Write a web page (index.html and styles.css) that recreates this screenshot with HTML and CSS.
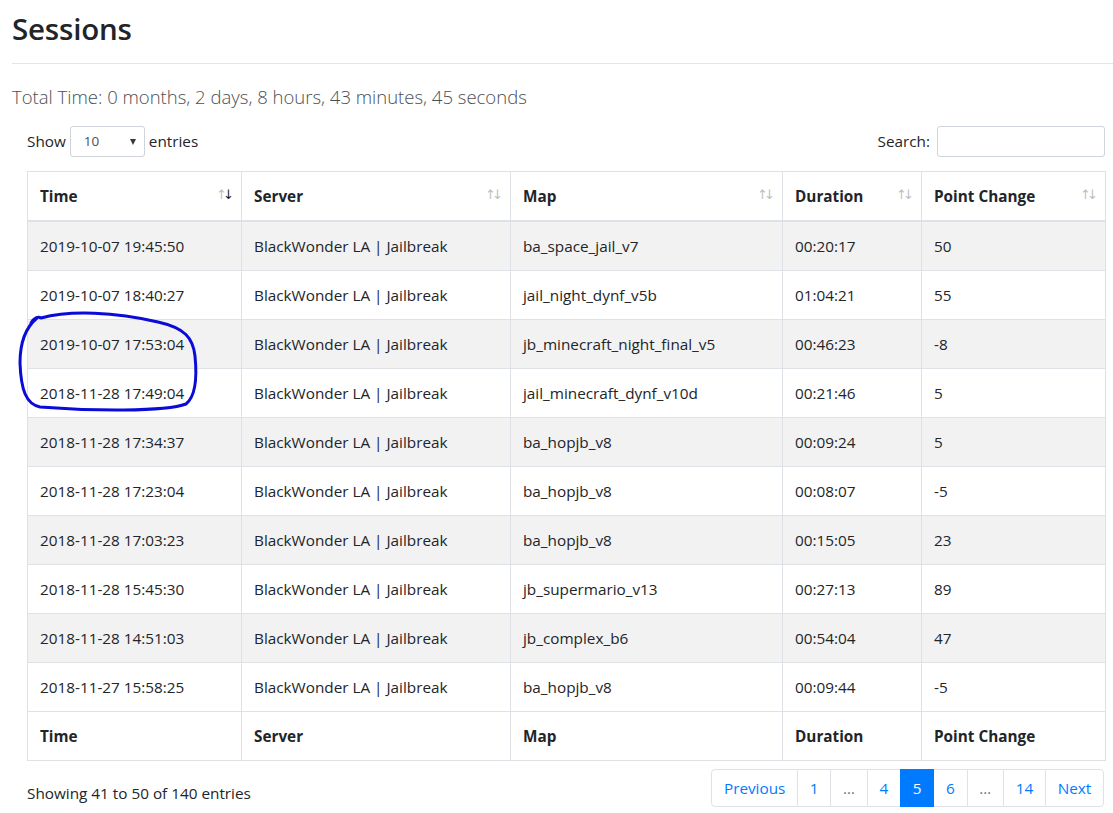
FILE: index.html
```html
<!DOCTYPE html>
<html lang="en">
<head>
<meta charset="utf-8">
<title>Sessions</title>
<link rel="stylesheet" href="styles.css">
</head>
<body>
<div class="page">
  <h1 class="title">Sessions</h1>
  <hr class="rule">
  <p class="lead">Total Time: 0 months, 2 days, 8 hours, 43 minutes, 45 seconds</p>
  <div class="dt-wrap">
    <div class="dt-top">
      <label class="dt-length">Show
        <span class="select-box"><span class="select-val">10</span></span>
        entries</label>
      <label class="dt-filter">Search: <span class="search-box"></span></label>
    </div>
    <table class="sessions">
      <colgroup>
        <col class="c-time"><col class="c-server"><col class="c-map"><col class="c-dur"><col class="c-pts">
      </colgroup>
      <thead>
        <tr>
          <th class="sort sort-desc">Time</th>
          <th class="sort">Server</th>
          <th class="sort">Map</th>
          <th class="sort">Duration</th>
          <th class="sort">Point Change</th>
        </tr>
      </thead>
      <tbody>
        <tr><td>2019-10-07 19:45:50</td><td>BlackWonder LA | Jailbreak</td><td>ba_space_jail_v7</td><td>00:20:17</td><td>50</td></tr>
        <tr><td>2019-10-07 18:40:27</td><td>BlackWonder LA | Jailbreak</td><td>jail_night_dynf_v5b</td><td>01:04:21</td><td>55</td></tr>
        <tr><td>2019-10-07 17:53:04</td><td>BlackWonder LA | Jailbreak</td><td>jb_minecraft_night_final_v5</td><td>00:46:23</td><td>-8</td></tr>
        <tr><td>2018-11-28 17:49:04</td><td>BlackWonder LA | Jailbreak</td><td>jail_minecraft_dynf_v10d</td><td>00:21:46</td><td>5</td></tr>
        <tr><td>2018-11-28 17:34:37</td><td>BlackWonder LA | Jailbreak</td><td>ba_hopjb_v8</td><td>00:09:24</td><td>5</td></tr>
        <tr><td>2018-11-28 17:23:04</td><td>BlackWonder LA | Jailbreak</td><td>ba_hopjb_v8</td><td>00:08:07</td><td>-5</td></tr>
        <tr><td>2018-11-28 17:03:23</td><td>BlackWonder LA | Jailbreak</td><td>ba_hopjb_v8</td><td>00:15:05</td><td>23</td></tr>
        <tr><td>2018-11-28 15:45:30</td><td>BlackWonder LA | Jailbreak</td><td>jb_supermario_v13</td><td>00:27:13</td><td>89</td></tr>
        <tr><td>2018-11-28 14:51:03</td><td>BlackWonder LA | Jailbreak</td><td>jb_complex_b6</td><td>00:54:04</td><td>47</td></tr>
        <tr><td>2018-11-27 15:58:25</td><td>BlackWonder LA | Jailbreak</td><td>ba_hopjb_v8</td><td>00:09:44</td><td>-5</td></tr>
      </tbody>
      <tfoot>
        <tr><th>Time</th><th>Server</th><th>Map</th><th>Duration</th><th>Point Change</th></tr>
      </tfoot>
    </table>
    <div class="dt-bottom">
      <div class="dt-info">Showing 41 to 50 of 140 entries</div>
      <ul class="pagination">
        <li class="pg"><a>Previous</a></li>
        <li class="pg"><a>1</a></li>
        <li class="pg disabled"><a>…</a></li>
        <li class="pg"><a>4</a></li>
        <li class="pg active"><a>5</a></li>
        <li class="pg"><a>6</a></li>
        <li class="pg disabled"><a>…</a></li>
        <li class="pg"><a>14</a></li>
        <li class="pg"><a>Next</a></li>
      </ul>
    </div>
  </div>
</div>
<svg class="annotation" width="1113" height="813" viewBox="0 0 1113 813" aria-hidden="true">
  <path d="M31 323 C34 318 38 316 41 318 C70 310 115 312 158 322 C185 328 193 338 195 356 C197 376 196 396 186 404 C165 412 90 411 40 407 C26 404 21 390 20 363 C20 343 25 328 37 318" fill="none" stroke="#0b0bd8" stroke-width="3" stroke-linecap="round" stroke-linejoin="round"/>
</svg>
</body>
</html>
```
FILE: styles.css
```css
* { box-sizing: border-box; }
html, body { margin: 0; padding: 0; }
body {
  font-family: "Segoe UI", "Open Sans", "DejaVu Sans", sans-serif;
  font-size: 15.3px;
  line-height: 1.5;
  color: #212529;
  background: #fff;
  overflow: hidden;
}
.page {
  padding: 11px 0 0 12px;
}
.title {
  margin: 0;
  font-size: 29.5px;
  font-weight: 600;
  line-height: 36px;
  letter-spacing: -0.2px;
}
.rule {
  margin: 16px 0 0 0;
  border: 0;
  border-top: 1px solid #e5e5e5;
}
.lead {
  margin: 18px 0 0 0;
  font-size: 18.5px;
  font-weight: 300;
  line-height: 30px;
  color: #4a4f54;
}
.dt-wrap {
  padding: 0 8px 0 15px;
}
.dt-top {
  display: flex;
  justify-content: space-between;
  align-items: center;
  margin-top: 14px;
  height: 31px;
}
.dt-length, .dt-filter {
  display: flex;
  align-items: center;
  font-weight: 400;
  white-space: nowrap;
}
.select-box {
  position: relative;
  display: inline-block;
  width: 75px;
  height: 31px;
  margin: 0 4px 0 4px;
  border: 1px solid #ced4da;
  border-radius: 3px;
  font-size: 13.5px;
  line-height: 29px;
  padding-left: 13px;
  color: #495057;
}
.select-box::after {
  content: "";
  position: absolute;
  right: 8px;
  top: 12px;
  border-left: 3.5px solid transparent;
  border-right: 3.5px solid transparent;
  border-top: 6px solid #343a40;
}
.search-box {
  display: inline-block;
  width: 168px;
  height: 31px;
  margin-left: 7px;
  border: 1px solid #ced4da;
  border-radius: 3px;
}
.sessions {
  width: 100%;
  margin-top: 14px;
  border-collapse: collapse;
  table-layout: fixed;
}
.c-time { width: 214px; }
.c-server { width: 269px; }
.c-map { width: 272px; }
.c-dur { width: 139px; }
.c-pts { width: 184px; }
.sessions th, .sessions td {
  border: 1px solid #dee2e6;
  padding: 12px;
  text-align: left;
  vertical-align: top;
  white-space: nowrap;
  line-height: 24px;
}
.sessions th { font-weight: 700; }
.sessions thead th {
  border-bottom: 2px solid #dee2e6;
  position: relative;
  padding-right: 30px;
}
.sessions tbody tr:nth-child(odd) { background: #f2f2f2; }
.sort::before, .sort::after {
  position: absolute;
  bottom: 13px;
  font-family: "DejaVu Sans", sans-serif;
  font-size: 13px;
  line-height: 24px;
  opacity: 0.3;
  font-weight: 400;
}
.sort::before { content: "\2191"; right: 14px; }
.sort::after { content: "\2193"; right: 7px; }
.sort-desc::after { opacity: 1; }
.dt-bottom {
  display: flex;
  justify-content: space-between;
  align-items: flex-start;
  margin-top: 8px;
}
.dt-info {
  padding-top: 13px;
  white-space: nowrap;
}
.pagination {
  display: flex;
  list-style: none;
  margin: 0 1px 0 0;
  padding: 0;
}
.pg a {
  display: block;
  padding: 8px 11.75px;
  line-height: 20px;
  color: #007bff;
  border: 1px solid #dee2e6;
  margin-left: -1px;
  background: #fff;
}
.pg:first-child a { margin-left: 0; border-radius: 4px 0 0 4px; }
.pg:last-child a { border-radius: 0 4px 4px 0; }
.pg.disabled a { color: #6c757d; }
.pg.active a {
  background: #007bff;
  border-color: #007bff;
  color: #fff;
  position: relative;
}
.annotation {
  position: absolute;
  left: 0;
  top: 0;
  pointer-events: none;
}
```
